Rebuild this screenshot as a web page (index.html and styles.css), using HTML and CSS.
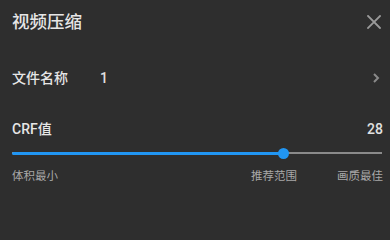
FILE: index.html
```html
<!DOCTYPE html>
<html lang="zh">
<head>
<meta charset="utf-8">
<link rel="stylesheet" href="styles.css">
</head>
<body>
<div class="panel">
  <div class="header">
    <div class="title">视频压缩</div>
    <svg class="close" width="14" height="14" viewBox="0 0 14 14"><path d="M1 1L13 13M13 1L1 13" stroke="#9a9a9a" stroke-width="1.8" fill="none" stroke-linecap="square"/></svg>
  </div>
  <div class="row name-row">
    <div class="label">文件名称</div>
    <div class="value">1</div>
    <svg class="chev" width="8" height="10" viewBox="0 0 8 10"><path d="M2 1L6 5L2 9" stroke="#8a8a8a" stroke-width="2" fill="none"/></svg>
  </div>
  <div class="row crf-row">
    <div class="label">CRF值</div>
    <div class="num">28</div>
  </div>
  <div class="slider">
    <div class="track"></div>
    <div class="fill" style="width: 272px"></div>
    <div class="thumb" style="left: 266px"></div>
  </div>
  <div class="marks">
    <span>体积最小</span>
    <span class="mid">推荐范围</span>
    <span>画质最佳</span>
  </div>
</div>
</body>
</html>
```
FILE: styles.css
```css
html, body {
  margin: 0;
  padding: 0;
  background: #2e2e2e;
}
body {
  width: 390px;
  height: 210px;
  overflow: hidden;
  font-family: Roboto, "Noto Sans CJK SC", sans-serif;
  color: #e4e4e4;
}
.panel {
  display: flex;
  flex-direction: column;
  padding: 0 7px 0 12px;
}
.header {
  height: 44px;
  display: flex;
  align-items: center;
  justify-content: space-between;
}
.title {
  font-size: 17.5px;
  font-weight: 500;
  color: #e6e6e6;
  line-height: 24px;
}
.close {
  margin-right: 2px;
  display: block;
}
.row {
  display: flex;
  align-items: center;
}
.name-row {
  margin-top: 22px;
  height: 24px;
}
.label {
  font-size: 14px;
  font-weight: 500;
  color: #e6e6e6;
  line-height: 20px;
}
.name-row .label {
  width: 88px;
}
.value {
  flex: 1;
  font-size: 14px;
  font-weight: 500;
  color: #e0e0e0;
}
.chev {
  display: block;
  margin-right: 3px;
}
.crf-row {
  margin-top: 28px;
  height: 22px;
  justify-content: space-between;
}
.num {
  font-size: 14px;
  font-weight: 500;
  color: #e0e0e0;
}
.slider {
  position: relative;
  margin-top: 6px;
  height: 14px;
  margin-right: 1px;
}
.track {
  position: absolute;
  left: 0;
  right: 0;
  top: 6px;
  height: 2px;
  background: #8a8a8a;
}
.fill {
  position: absolute;
  left: 0;
  top: 5.5px;
  height: 3px;
  border-radius: 2px;
  background: #2196f3;
}
.thumb {
  position: absolute;
  top: 1.5px;
  width: 11px;
  height: 11px;
  border-radius: 50%;
  background: #2196f3;
}
.marks {
  margin-top: 6px;
  height: 17px;
  display: flex;
  align-items: center;
  font-size: 11.5px;
  color: #a8a8a8;
}
.marks .mid {
  margin-left: auto;
  margin-right: 40px;
}
```
